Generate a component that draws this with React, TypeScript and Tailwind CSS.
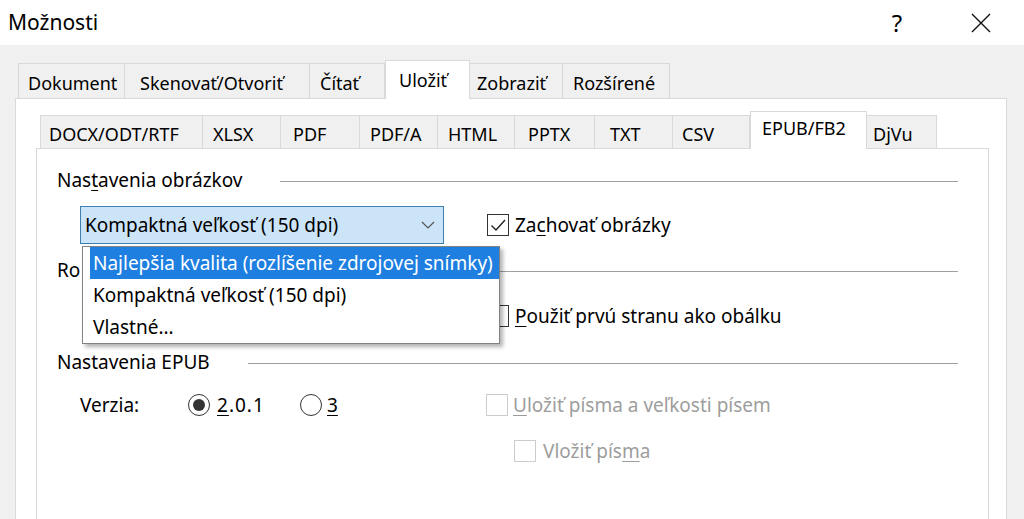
import { clsx } from 'clsx';
import type { ReactNode } from 'react';

type TabDef = { label: string; cls: string; active?: boolean };

const outerTabs: TabDef[] = [
  { label: 'Dokument', cls: 'w-[107px] pl-[9px] border-l' },
  { label: 'Skenovať/Otvoriť', cls: 'w-[185px] pl-[15px]' },
  { label: 'Čítať', cls: 'w-[75px] pl-[10px]' },
  { label: 'Uložiť', cls: 'w-[85px] pl-[13px]', active: true },
  { label: 'Zobraziť', cls: 'w-[93px] pl-[7px]' },
  { label: 'Rozšírené', cls: 'w-[107px] pl-[10px]' },
];

const innerTabs: TabDef[] = [
  { label: 'DOCX/ODT/RTF', cls: 'w-[163px] pl-[8px] border-l' },
  { label: 'XLSX', cls: 'w-[78px] pl-[10px]' },
  { label: 'PDF', cls: 'w-[79px] pl-[12px]' },
  { label: 'PDF/A', cls: 'w-[78px] pl-[10px]' },
  { label: 'HTML', cls: 'w-[77px] pl-[10px]' },
  { label: 'PPTX', cls: 'w-[80px] pl-[13px]' },
  { label: 'TXT', cls: 'w-[78px] pl-[15px]' },
  { label: 'CSV', cls: 'w-[77px] pl-[9px]' },
  { label: 'EPUB/FB2', cls: 'w-[117px] pl-[11px]', active: true },
  { label: 'DjVu', cls: 'w-[70px] pl-[6px]' },
];

function OuterTab({ tab }: { tab: TabDef }) {
  return (
    <div
      className={clsx(
        'flex items-center whitespace-nowrap border-t border-r border-[#d9d9d9]',
        tab.active
          ? 'relative z-10 h-[39px] -mb-px bg-white border-l'
          : 'h-[35px] pt-[4px] bg-[#f0f0f0]',
        tab.cls
      )}
    >
      {tab.label}
    </div>
  );
}

function InnerTab({ tab }: { tab: TabDef }) {
  return (
    <div
      className={clsx(
        'flex items-center whitespace-nowrap border-t border-r border-[#d9d9d9]',
        tab.active
          ? 'relative z-10 h-[38px] -mb-px pb-[4px] bg-white border-l'
          : 'h-[33px] pt-[5px] bg-[#f0f0f0]',
        tab.cls
      )}
    >
      {tab.label}
    </div>
  );
}

function GroupTitle({ children, className }: { children: ReactNode; className?: string }) {
  return (
    <div className={clsx('flex items-center h-[24px]', className)}>
      <span className="whitespace-nowrap">{children}</span>
      <div className="ml-[38px] mt-[2px] flex-1 h-px bg-[#a0a0a0]" />
    </div>
  );
}

function CheckBox({ checked, disabled }: { checked?: boolean; disabled?: boolean }) {
  return (
    <div
      className={clsx(
        'w-[22px] h-[22px] shrink-0 border bg-white flex items-center justify-center',
        disabled ? 'border-[#cccccc]' : 'border-[#333333]'
      )}
    >
      {checked && (
        <svg width="20" height="20" viewBox="0 0 20 20">
          <path d="M3.5 10.5l4.5 4.5L17 5" fill="none" stroke="#222" strokeWidth="1.4" />
        </svg>
      )}
    </div>
  );
}

function Radio({ checked }: { checked?: boolean }) {
  return (
    <div className="w-[22px] h-[22px] shrink-0 rounded-full border border-[#333333] bg-white flex items-center justify-center">
      {checked && <div className="w-[12px] h-[12px] rounded-full bg-[#333333]" />}
    </div>
  );
}

const u = 'underline underline-offset-[3px] decoration-1';

export default function App() {
  return (
    <div className="w-[1024px] h-[519px] overflow-hidden flex flex-col bg-[#f0f0f0] text-black text-[19px] font-['Noto_Sans',sans-serif]">
      {/* Title bar */}
      <div className="h-[45px] shrink-0 bg-white flex items-center pl-[8px] pr-[20px]">
        <span className="text-[21px]">Možnosti</span>
        <div className="ml-auto flex items-center gap-[38px]">
          <div className="w-[46px] flex justify-center text-[24px] leading-none">?</div>
          <div className="w-[46px] flex justify-center">
            <svg width="20" height="20" viewBox="0 0 20 20">
              <path d="M1 1l18 18M19 1L1 19" stroke="#111" strokeWidth="1.4" />
            </svg>
          </div>
        </div>
      </div>

      <div className="flex-1 min-h-0 flex flex-col pt-[15px] pl-[15px] pr-[17px]">
        {/* Outer tabs */}
        <div className="flex items-end h-[38px] pl-[3px] text-[18px]">
          {outerTabs.map((t) => (
            <OuterTab key={t.label} tab={t} />
          ))}
        </div>

        <div className="flex-1 flex flex-col bg-white border border-b-0 border-[#d9d9d9] pl-[20px] pr-[17px] pt-[12px]">
          {/* Inner tabs */}
          <div className="flex items-end h-[37px] pl-[4px] text-[18px]">
            {innerTabs.map((t) => (
              <InnerTab key={t.label} tab={t} />
            ))}
          </div>

          <div className="relative flex-1 flex flex-col bg-white border border-b-0 border-[#d9d9d9] pl-[20px] pr-[30px] pt-[19px]">
            <GroupTitle>
              Nas<span className={u}>t</span>avenia obrázkov
            </GroupTitle>

            <div className="mt-[14px] flex items-center">
              <div className="ml-[23px] w-[364px] h-[38px] flex items-center border border-[#3c7fb1] bg-[#cce4f7] pl-[4px] pr-[8px]">
                <span className="flex-1 whitespace-nowrap">Kompaktná veľkosť (150 dpi)</span>
                <svg width="14" height="8" viewBox="0 0 14 8">
                  <path d="M1 1l6 6 6-6" fill="none" stroke="#555" strokeWidth="1.2" />
                </svg>
              </div>
              <div className="ml-[43px] flex items-center gap-[6px]">
                <CheckBox checked />
                <span>
                  Za<span className={u}>c</span>hovať obrázky
                </span>
              </div>
            </div>

            {/* rest of this title sits under the open list */}
            <GroupTitle className="mt-[14px]">Ro</GroupTitle>

            <div className="mt-[22px] ml-[430px] flex items-center gap-[6px] h-[24px]">
              <CheckBox />
              <span>
                <span className={u}>P</span>oužiť prvú stranu ako obálku
              </span>
            </div>

            <GroupTitle className="mt-[22px]">Nastavenia EPUB</GroupTitle>

            <div className="mt-[19px] ml-[23px] flex items-center h-[24px]">
              <span className="w-[108px]">Verzia:</span>
              <div className="w-[112px] flex items-center gap-[7px]">
                <Radio checked />
                <span className="tracking-[1px]">
                  <span className={u}>2</span>.0.1
                </span>
              </div>
              <div className="w-[186px] flex items-center gap-[5px]">
                <Radio />
                <span className={u}>3</span>
              </div>
              <div className="flex items-center gap-[5px] text-[#9d9d9d]">
                <CheckBox disabled />
                <span>
                  <span className={u}>U</span>ložiť písma a veľkosti písem
                </span>
              </div>
            </div>

            <div className="mt-[22px] ml-[457px] flex items-center gap-[7px] h-[24px] text-[#9d9d9d]">
              <CheckBox disabled />
              <span>
                Vložiť pís<span className={u}>m</span>a
              </span>
            </div>

            {/* Open dropdown list */}
            <div className="absolute left-[45px] top-[97px] w-[418px] h-[98px] bg-white border border-[#828282] pl-[7px] shadow-[3px_3px_4px_rgba(0,0,0,0.3)] z-20">
              <div className="h-[32px] flex items-center pl-[3px] bg-[#1e7fe0] text-white whitespace-nowrap">
                Najlepšia kvalita (rozlíšenie zdrojovej snímky)
              </div>
              <div className="h-[32px] flex items-center pl-[3px] whitespace-nowrap">
                Kompaktná veľkosť (150 dpi)
              </div>
              <div className="h-[32px] flex items-center pl-[3px]">Vlastné...</div>
            </div>
          </div>
        </div>
      </div>
    </div>
  );
}
